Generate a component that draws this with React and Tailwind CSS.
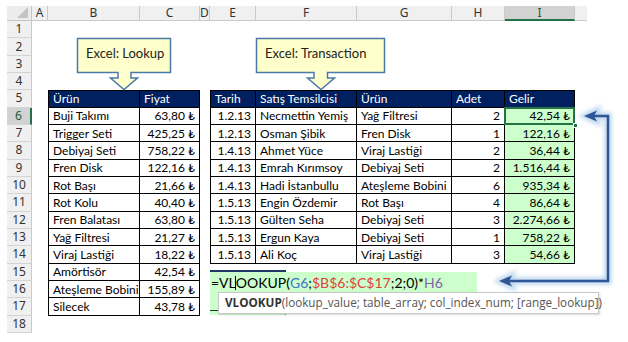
import React from "react";

const COLS = ["A", "B", "C", "D", "E", "F", "G", "H", "I", "J"];

const left = [
  ["Buji Takımı", "63,80 ₺"],
  ["Trigger Seti", "425,25 ₺"],
  ["Debiyaj Seti", "758,22 ₺"],
  ["Fren Disk", "122,16 ₺"],
  ["Rot Başı", "21,66 ₺"],
  ["Rot Kolu", "40,40 ₺"],
  ["Fren Balatası", "63,80 ₺"],
  ["Yağ Filtresi", "21,27 ₺"],
  ["Viraj Lastiği", "18,22 ₺"],
  ["Amörtisör", "42,54 ₺"],
  ["Ateşleme Bobini", "155,89 ₺"],
  ["Silecek", "43,78 ₺"],
];

const right = [
  ["1.2.13", "Necmettin Yemiş", "Yağ Filtresi", "2", "42,54 ₺"],
  ["1.2.13", "Osman Şibik", "Fren Disk", "1", "122,16 ₺"],
  ["1.4.13", "Ahmet Yüce", "Viraj Lastiği", "2", "36,44 ₺"],
  ["1.4.13", "Emrah Kırımsoy", "Debiyaj Seti", "2", "1.516,44 ₺"],
  ["1.4.13", "Hadi İstanbullu", "Ateşleme Bobini", "6", "935,34 ₺"],
  ["1.5.13", "Engin Özdemir", "Rot Başı", "4", "86,64 ₺"],
  ["1.5.13", "Gülten Seha", "Debiyaj Seti", "3", "2.274,66 ₺"],
  ["1.5.13", "Ergun Kaya", "Debiyaj Seti", "1", "758,22 ₺"],
  ["1.5.13", "Ali Koç", "Viraj Lastiği", "3", "54,66 ₺"],
];

function cell(r, c) {
  const base = "flex items-center pt-[1px] px-[4px] whitespace-nowrap overflow-visible";
  if ((c === 1 || c === 2) && r >= 5 && r <= 17) {
    let cls = base + " border-black border-r border-b";
    if (c === 1) cls += " border-l";
    if (r === 5) cls += " border-t bg-[#002060] text-white";
    let text = "";
    if (r === 5) text = c === 1 ? "Ürün" : "Fiyat";
    else {
      const row = left[r - 6];
      text = c === 1 ? row[0] : row[1];
      if (c === 2) cls += " justify-end";
    }
    return { text, cls };
  }
  if (c >= 4 && c <= 8 && r >= 5 && r <= 14) {
    let cls = base + " border-black border-r border-b";
    if (c === 4) cls += " border-l";
    if (r === 5) {
      cls += " border-t bg-[#002060] text-white";
      const h = ["Tarih", "Satış Temsilcisi", "Ürün", "Adet", "Gelir"][c - 4];
      return { text: h, cls };
    }
    const row = right[r - 6];
    const text = row[c - 4];
    if (c === 4 || c === 7 || c === 8) cls += " justify-end";
    if (c === 8) cls += " bg-[#ccffcc]";
    return { text, cls };
  }
  return { text: "", cls: "" };
}

export default function App() {
  const rows = Array.from({ length: 18 }, (_, i) => i + 1);
  return (
    <div className="relative w-[628px] h-[342px] overflow-hidden bg-white pt-[6px] pl-[7px] font-['Lato',sans-serif] text-[12px] text-black">
      <div className="grid grid-cols-[25px_16px_92px_60px_10px_46px_101px_95px_53px_70px_12px] grid-rows-[15px_repeat(18,17.333px)]">
        <div className="relative bg-[#ececec] border-r border-b border-[#c6c6c6]">
          <div className="absolute right-[3px] bottom-[2px] w-0 h-0 border-l-[11px] border-l-transparent border-b-[11px] border-b-[#c4c4c4]" />
        </div>
        {COLS.map((L) => (
          <div
            key={L}
            className={
              "flex items-center justify-center text-[12px] font-['Noto_Sans',sans-serif] border-r border-[#c9c9c9] " +
              (L === "I"
                ? "bg-[#d2d2d2] text-[#1e5c3a] border-b-2 border-b-[#217346]"
                : "bg-[#f0f0f0] text-[#333] border-b border-b-[#c9c9c9]") +
              (L === "J" ? " border-r-0" : "")
            }
          >
            {L === "J" ? "" : L}
          </div>
        ))}
        {rows.map((r) => (
          <React.Fragment key={r}>
            <div
              className={
                "flex items-center justify-center text-[12px] font-['Noto_Sans',sans-serif] border-b border-[#d4d4d4] " +
                (r === 6
                  ? "bg-[#d2d2d2] text-[#1e5c3a] border-r-2 border-r-[#217346]"
                  : "bg-[#f0f0f0] text-[#333] border-r border-r-[#c9c9c9]")
              }
            >
              {r}
            </div>
            {COLS.map((L, c) => {
              const { text, cls } = cell(r, c);
              return (
                <div key={L} className={cls + (r === 6 && c === 8 ? " relative" : "")}>
                  {text}
                  {r === 6 && c === 8 && (
                    <>
                      <div className="absolute inset-[-1px] border-2 border-[#217346]" />
                      <div className="absolute right-[-4px] bottom-[-4px] w-[5px] h-[5px] bg-[#217346] border border-white" />
                    </>
                  )}
                </div>
              );
            })}
          </React.Fragment>
        ))}
      </div>

      <svg className="absolute left-0 top-0" width="628" height="342" viewBox="0 0 628 342">
        <path
          d="M77.5,38.5 H170.5 V72.5 H131 V78 H137.5 L124,89.5 L110.5,78 H118 V72.5 H77.5 Z"
          fill="#ffffcc"
          stroke="#4a7aa8"
          strokeWidth="1.5"
        />
        <path
          d="M256.5,38.5 H384.5 V72.5 H327.5 V78 H334.5 L321,89.5 L307.5,78 H314 V72.5 H256.5 Z"
          fill="#ffffcc"
          stroke="#4a7aa8"
          strokeWidth="1.5"
        />
      </svg>
      <div className="absolute left-[86px] top-[44px] text-[13px] text-[#222]">Excel: Lookup</div>
      <div className="absolute left-[265px] top-[44px] text-[13px] text-[#222]">Excel: Transaction</div>

      <div className="absolute left-[210px] top-[270px] w-[76px] h-[2px] bg-[#1f3864]" />
      <div className="absolute left-[210px] top-[272px] w-[267px] h-[22px] bg-[#ccffcc]" />
      <div className="absolute left-[210px] top-[294px] w-[76px] h-[21px] bg-[#ccffcc] border-r border-[#6a8a6a]">
        <div className="absolute left-0 top-[16px] w-[8px] h-[1px] bg-[#333]" />
      </div>
      <div className="absolute left-[211px] top-[274px] h-[18px] flex items-center text-[14px] leading-none whitespace-nowrap">
        <span>=VL</span>
        <span className="inline-block w-[1px] h-[14px] bg-black mx-[-0.5px]" />
        <span>OOKUP(</span>
        <span className="text-[#4472c4]">G6</span>
        <span>;</span>
        <span className="text-[#e0403c]">$B$6:$C$17</span>
        <span>;2;0)*</span>
        <span className="text-[#8064a2]">H6</span>
      </div>

      <div className="absolute left-[218px] top-[292px] w-[381px] h-[22px] bg-white border border-[#c8c8c8] shadow-[1px_1px_2px_rgba(0,0,0,0.15)] flex items-center pl-[6px] text-[11.7px] font-['Open_Sans',sans-serif] text-[#555] whitespace-nowrap">
        <span className="font-bold text-[#333]">VLOOKUP</span>
        <span>(lookup_value; table_array; col_index_num; [range_lookup])</span>
      </div>

      <svg className="absolute left-0 top-0 pointer-events-none" width="628" height="342" viewBox="0 0 628 342">
        <defs>
          <filter id="glow" x="-20%" y="-20%" width="140%" height="140%">
            <feGaussianBlur stdDeviation="2" />
          </filter>
        </defs>
        <g filter="url(#glow)" opacity="0.7">
          <polyline points="592,116 608,116 608,281 507,281" fill="none" stroke="#9dc3e6" strokeWidth="7" />
          <path d="M584,116 L597,110 L594,116 L597,122 Z" fill="#9dc3e6" stroke="#9dc3e6" strokeWidth="5" />
          <path d="M499,281 L512,275 L509,281 L512,287 Z" fill="#9dc3e6" stroke="#9dc3e6" strokeWidth="5" />
        </g>
        <polyline points="592,116 608,116 608,281 507,281" fill="none" stroke="#2f5597" strokeWidth="2.5" />
        <path d="M584,116 L597,110.5 L594,116 L597,121.5 Z" fill="#2f5597" />
        <path d="M499,281 L512,275.5 L509,281 L512,286.5 Z" fill="#2f5597" />
      </svg>
    </div>
  );
}
